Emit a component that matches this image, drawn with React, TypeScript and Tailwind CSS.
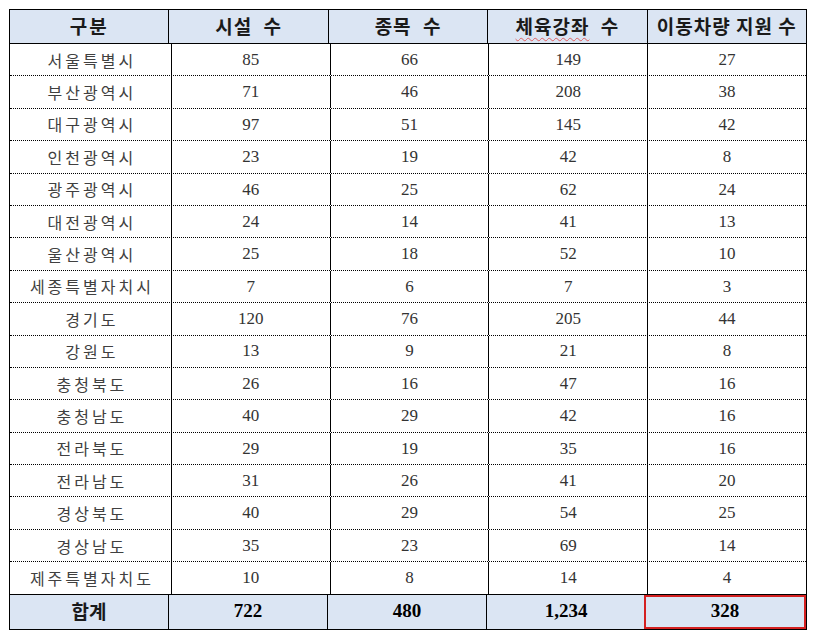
const ROWS: [string, string, string, string, string][] = [
  ["서울특별시", "85", "66", "149", "27"],
  ["부산광역시", "71", "46", "208", "38"],
  ["대구광역시", "97", "51", "145", "42"],
  ["인천광역시", "23", "19", "42", "8"],
  ["광주광역시", "46", "25", "62", "24"],
  ["대전광역시", "24", "14", "41", "13"],
  ["울산광역시", "25", "18", "52", "10"],
  ["세종특별자치시", "7", "6", "7", "3"],
  ["경기도", "120", "76", "205", "44"],
  ["강원도", "13", "9", "21", "8"],
  ["충청북도", "26", "16", "47", "16"],
  ["충청남도", "40", "29", "42", "16"],
  ["전라북도", "29", "19", "35", "16"],
  ["전라남도", "31", "26", "41", "20"],
  ["경상북도", "40", "29", "54", "25"],
  ["경상남도", "35", "23", "69", "14"],
  ["제주특별자치도", "10", "8", "14", "4"],
];

const sans = "font-['Noto_Sans_CJK_KR','Noto_Sans',sans-serif]";
const serif = "font-['Liberation_Serif','Noto_Sans_CJK_KR',serif]";

export default function App() {
  return (
    <div className="w-[820px] h-[638px] bg-white pt-[9px] pl-[9px]">
      <div className="w-[798px] border border-black">
        {/* header */}
        <div className="flex h-[34px] bg-[#dbe5f3] border-b border-black">
          {["구분", "시설 수", "종목 수", "체육강좌 수", "이동차량 지원 수"].map((h, i) => (
            <div
              key={h}
              className={`flex-1 flex items-center justify-center text-[19px] font-bold text-[#1a1a1a] ${sans} ${
                i < 4 ? "border-r border-black" : ""
              }`}
            >
              {i === 3 ? (
                <span className="tracking-[1px] [word-spacing:6px]">
                  <span className="underline decoration-wavy decoration-[#e06060] decoration-1 underline-offset-[3px]">
                    체육강좌
                  </span>{" "}
                  수
                </span>
              ) : (
                <span
                  className={
                    i === 4 ? "tracking-[1px]" : i === 0 ? "tracking-[2px]" : "tracking-[1px] [word-spacing:6px]"
                  }
                >
                  {h}
                </span>
              )}
            </div>
          ))}
        </div>
        {/* body */}
        {ROWS.map((r, ri) => (
          <div
            key={r[0]}
            className={`flex h-[32.4px] ${ri < ROWS.length - 1 ? "border-b border-dotted border-black" : "border-b border-black"}`}
          >
            {r.map((c, ci) => (
              <div
                key={ci}
                className={`flex-1 flex items-center justify-center ${ci < 4 ? "border-r border-black" : ""} ${
                  ci === 0
                    ? `${sans} text-[16px] tracking-[3px] pl-[3px] text-[#404040]`
                    : `${serif} text-[17px] text-[#333]`
                }`}
              >
                {c}
              </div>
            ))}
          </div>
        ))}
        {/* total */}
        <div className="flex h-[34px] bg-[#dbe5f3]">
          {["합계", "722", "480", "1,234", "328"].map((c, ci) => (
            <div
              key={ci}
              className={`flex-1 flex items-center justify-center font-bold ${
                ci < 3 ? "border-r border-black" : ""
              } ${ci === 4 ? "border-2 border-[#d42020] -ml-px" : ""} ${
                ci === 0 ? `${sans} text-[19px] text-[#1a1a1a]` : `${serif} text-[19px] text-black`
              }`}
            >
              {c}
            </div>
          ))}
        </div>
      </div>
    </div>
  );
}
